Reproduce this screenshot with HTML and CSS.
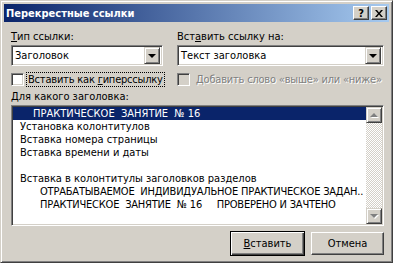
FILE: index.html
```html
<!doctype html>
<html>
<head>
<meta charset="utf-8">
<title>Перекрестные ссылки</title>
<link rel="stylesheet" href="styles.css">
</head>
<body>
<div class="window">
	<div class="titlebar">
		<span class="title">Перекрестные ссылки</span>
		<div class="caption">
			<span class="cap-btn">?</span>
			<span class="cap-btn"><svg width="8" height="7" viewBox="0 0 8 7"><path d="M0 0h2l2 2.5L6 0h2L5 3.5 8 7H6L4 4.5 2 7H0l3-3.5z" fill="#000"/></svg></span>
		</div>
	</div>
	<div class="content">
		<div class="cols">
			<div class="col col-left">
				<div class="label"><u>Т</u>ип ссылки:</div>
				<div class="combo"><span class="combo-text">Заголовок</span><span class="drop"><i class="arrow-down"></i></span></div>
				<div class="check-row">
					<span class="checkbox"></span>
					<span class="check-label focus">Вставить как <u>г</u>иперссылку</span>
				</div>
			</div>
			<div class="col col-right">
				<div class="label">Вст<u>а</u>вить ссылку на:</div>
				<div class="combo"><span class="combo-text">Текст заголовка</span><span class="drop"><i class="arrow-down"></i></span></div>
				<div class="check-row disabled">
					<span class="checkbox"></span>
					<span class="check-label">Добавить слово «выше» или «ниже»</span>
				</div>
			</div>
		</div>
		<div class="label"><u>Д</u>ля какого заголовка:</div>
		<div class="listbox">
			<div class="items">
				<div class="item selected lvl1">ПРАКТИЧЕСКОЕ  ЗАНЯТИЕ  № 16</div>
				<div class="item">Установка колонтитулов</div>
				<div class="item">Вставка номера страницы</div>
				<div class="item">Вставка времени и даты</div>
				<div class="item"> </div>
				<div class="item">Вставка в колонтитулы заголовков разделов</div>
				<div class="item lvl2">ОТРАБАТЫВАЕМОЕ  ИНДИВИДУАЛЬНОЕ ПРАКТИЧЕСКОЕ ЗАДАН..</div>
				<div class="item lvl2">ПРАКТИЧЕСКОЕ  ЗАНЯТИЕ  № 16     ПРОВЕРЕНО И ЗАЧТЕНО</div>
			</div>
			<div class="scrollbar">
				<span class="sb-btn"><i class="arrow-up"></i></span>
				<span class="sb-track"></span>
				<span class="sb-btn"><i class="arrow-down grey"></i></span>
			</div>
		</div>
		<div class="buttons">
			<span class="btn default"><u>В</u>ставить</span>
			<span class="btn">Отмена</span>
		</div>
	</div>
</div>
</body>
</html>
```

FILE: styles.css
```css
* {margin:0; padding:0; box-sizing:border-box;}
body {background:#D4D0C8; font-family:"DejaVu Sans Condensed", "Liberation Sans", Arial, sans-serif; font-size:11px; color:#000;}
u {text-decoration:underline; text-underline-offset:1px;}

.window {width:393px; height:263px; background:#D4D0C8; border:1px solid; border-color:#D4D0C8 #404040 #404040 #D4D0C8; box-shadow:inset 1px 1px #fff, inset -1px -1px #808080; padding:3px;}

.titlebar {height:18px; display:flex; align-items:center; justify-content:space-between; padding:0 2px 0 2px; background:linear-gradient(to right, #0A246A, #A6CAF0);}
.title {color:#fff; font-weight:bold; font-size:11px;}
.caption {display:flex; gap:2px;}
.cap-btn {width:16px; height:14px; display:flex; align-items:center; justify-content:center; background:#D4D0C8; border:1px solid; border-color:#fff #404040 #404040 #fff; box-shadow:inset -1px -1px #808080; font-weight:bold; font-size:11px;}

.content {padding:8px 5px 0 7px;}
.cols {display:flex; gap:14px;}
.col-left {width:152px;}
.col-right {width:207px;}
.label {height:13px; line-height:13px; white-space:nowrap;}

.combo {height:21px; margin-top:2px; display:flex; align-items:center; background:#fff; border:1px solid; border-color:#808080 #fff #fff #808080; box-shadow:inset 1px 1px #404040, inset -1px -1px #D4D0C8; padding:2px;}
.combo-text {flex:1; padding-left:1px;}
.drop {width:16px; height:17px; display:flex; align-items:center; justify-content:center; background:#D4D0C8; border:1px solid; border-color:#D4D0C8 #404040 #404040 #D4D0C8; box-shadow:inset 1px 1px #fff, inset -1px -1px #808080;}
.arrow-down {display:block; width:0; height:0; border-left:4px solid transparent; border-right:4px solid transparent; border-top:4px solid #000;}
.arrow-up {display:block; width:0; height:0; border-left:4px solid transparent; border-right:4px solid transparent; border-bottom:4px solid #808080; filter:drop-shadow(1px 1px 0 #fff);}
.arrow-down.grey {border-top-color:#808080; filter:drop-shadow(1px 1px 0 #fff);}

.check-row {height:15px; margin-top:6px; display:flex; align-items:center; gap:2px; white-space:nowrap;}
.checkbox {flex:none; width:13px; height:13px; background:#fff; border:1px solid; border-color:#808080 #fff #fff #808080; box-shadow:inset 1px 1px #404040, inset -1px -1px #D4D0C8;}
.check-label {height:15px; line-height:13px; padding:0 1px; border:1px solid transparent; letter-spacing:-0.2px;}
.check-label.focus {border:1px dotted #000;}
.disabled .checkbox {background:#D4D0C8;}
.disabled .check-label {color:#808080; text-shadow:1px 1px 0 #fff; margin-left:2px;}

.content > .label {margin-top:3px;}
.listbox {height:121px; margin-top:2px; display:flex; background:#fff; border:1px solid; border-color:#808080 #fff #fff #808080; box-shadow:inset 1px 1px #404040, inset -1px -1px #D4D0C8; padding:1px;}
.items {flex:1; overflow:hidden;}
.item {height:13px; line-height:13px; padding-left:7px; white-space:pre; overflow:hidden;}
.item.selected {background:#0A246A; color:#fff;}
.item.lvl1 {padding-left:20px;}
.item.lvl2 {padding-left:27px; letter-spacing:-0.2px;}
.scrollbar {width:16px; display:flex; flex-direction:column;}
.sb-btn {height:16px; display:flex; align-items:center; justify-content:center; background:#D4D0C8; border:1px solid; border-color:#D4D0C8 #404040 #404040 #D4D0C8; box-shadow:inset 1px 1px #fff, inset -1px -1px #808080;}
.sb-track {flex:1; background:repeating-conic-gradient(#fff 0 25%, #D4D0C8 0 50%) 0 0/2px 2px;}

.buttons {display:flex; justify-content:flex-end; align-items:center; gap:6px; margin-top:4px; height:27px;}
.btn {width:73px; height:23px; display:flex; align-items:center; justify-content:center; background:#D4D0C8; border:1px solid; border-color:#fff #404040 #404040 #fff; box-shadow:inset -1px -1px #808080;}
.btn.default {width:75px; height:25px; border-color:#000; box-shadow:inset 1px 1px #fff, inset -1px -1px #404040, inset -2px -2px #808080;}
```
